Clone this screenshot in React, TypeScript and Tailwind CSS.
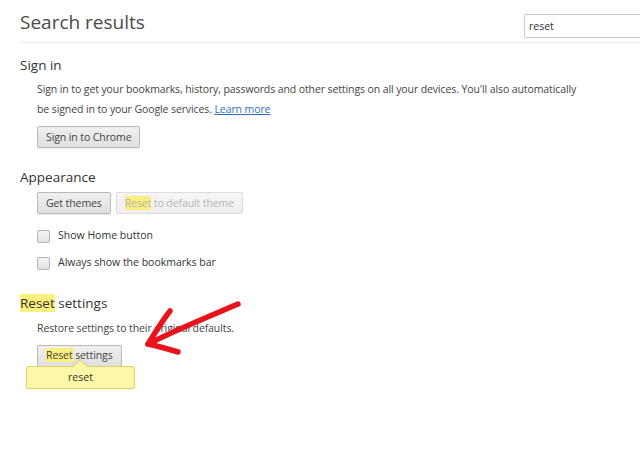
import React from 'react';

const font = { fontFamily: '"Open Sans", "Noto Sans", sans-serif' };

const Hl: React.FC<{ children: React.ReactNode }> = ({ children }) => (
  <span className="bg-[#fbef7e]">{children}</span>
);

const Button: React.FC<{ children: React.ReactNode; disabled?: boolean }> = ({ children, disabled }) => (
  <button
    className={
      disabled
        ? 'h-[22px] px-[8px] rounded-[2px] border border-[#dcdcdc] bg-gradient-to-b from-[#f6f6f6] to-[#efefef] text-[10.5px] text-[#b4b4b4] leading-none tracking-[-0.1px]'
        : 'h-[22px] px-[8px] rounded-[2px] border border-[#b9b9b9] bg-gradient-to-b from-[#f0f0f0] to-[#e0e0e0] text-[10.5px] text-[#444] leading-none tracking-[-0.1px] shadow-[0_1px_0_rgba(0,0,0,0.08)]'
    }
  >
    {children}
  </button>
);

const Checkbox: React.FC<{ label: string }> = ({ label }) => (
  <label className="flex items-center h-5 gap-[8px] text-[10.5px] text-[#333]">
    <span className="w-[13px] h-[13px] rounded-[2px] border border-[#b5b5b5] bg-gradient-to-b from-[#f4f4f4] to-[#e2e2e2]" />
    {label}
  </label>
);

export default function App() {
  return (
    <div className="relative w-[640px] h-[456px] overflow-hidden bg-white" style={font}>
      <div className="pl-5">
        <div className="flex items-start h-[43px] border-b border-[#eeeeee]">
          <h1 className="flex-1 pt-[8px] text-[19px] leading-[28px] text-[#4a4a4a]">Search results</h1>
          <div className="mt-[14px] mr-[-40px] w-[156px] h-[24px] border border-[#c8c8c8] rounded-[2px] pl-[4px] text-[10.5px] leading-[22px] text-[#333]">
            reset
          </div>
        </div>

        <section className="mt-3">
          <h2 className="text-[13.5px] leading-5 text-[#333]">Sign in</h2>
          <div className="pl-[17px] mt-1">
            <p className="text-[10.5px] leading-5 text-[#444] tracking-[-0.1px]">
              Sign in to get your bookmarks, history, passwords and other settings on all your devices. You'll also automatically
              <br />
              be signed in to your Google services. <a className="text-[#2b6fc2] underline">Learn more</a>
            </p>
            <div className="mt-[4px]">
              <Button>Sign in to Chrome</Button>
            </div>
          </div>
        </section>

        <section className="mt-[19px]">
          <h2 className="text-[13.5px] leading-5 text-[#333]">Appearance</h2>
          <div className="pl-[17px] mt-[5px]">
            <div className="flex gap-[5px]">
              <Button>Get themes</Button>
              <Button disabled>
                <Hl>Reset</Hl> to default theme
              </Button>
            </div>
            <div className="mt-[12px] flex flex-col gap-[7px]">
              <Checkbox label="Show Home button" />
              <Checkbox label="Always show the bookmarks bar" />
            </div>
          </div>
        </section>

        <section className="mt-[20px]">
          <h2 className="text-[13.5px] leading-5 text-[#333]">
            <Hl>Reset</Hl> settings
          </h2>
          <div className="pl-[17px] mt-[5px]">
            <p className="text-[10.5px] leading-5 text-[#444] tracking-[-0.1px]">Restore settings to their original defaults.</p>
            <div className="relative mt-[3px] inline-block">
              <Button>
                <Hl>Reset</Hl> settings
              </Button>
              <div className="absolute left-[-11px] top-[25px] w-[109px] h-[23px] rounded-[2px] border border-[#e4cf6a] bg-[#fdf7a8] text-[10.5px] leading-[21px] text-[#333] text-center">
                reset
                <span className="absolute left-[48px] top-[-6px] w-[10px] h-[10px] rotate-45 border-l border-t border-[#e4cf6a] bg-[#fdf7a8]" />
              </div>
            </div>
          </div>
        </section>
      </div>

      <svg className="absolute left-0 top-0 pointer-events-none" width="640" height="456">
        <g stroke="#e8131b" strokeWidth="5.5" strokeLinecap="round" strokeLinejoin="round" fill="none">
          <path d="M238 304 C 210 316, 180 328, 150 343" />
          <path d="M170 311 C 162 321, 155 333, 148 344" />
          <path d="M148 344 C 158 346, 168 349, 178 352" />
        </g>
      </svg>
    </div>
  );
}
